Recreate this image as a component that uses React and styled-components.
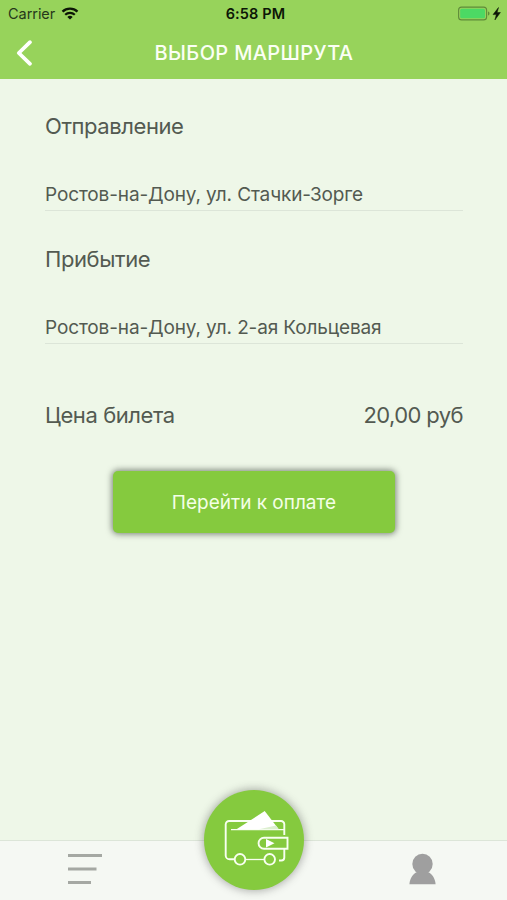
import React from 'react';
import styled, { createGlobalStyle } from 'styled-components';

const colors = {
  header: '#97d35b',
  primary: '#85ca3e',
  background: '#eef7e8',
  tabBar: '#f5f8f3',
  text: '#535a51',
  line: '#dce5d8',
  icon: '#9f9f9f',
};

const WifiIcon = () => (
  <svg width="18" height="13" viewBox="0 0 18 13">
    <path d="M1.5 4.6a11 11 0 0 1 15 0" fill="none" stroke="#0c1606" strokeWidth="2.3" />
    <path d="M4.2 7.7a7 7 0 0 1 9.6 0" fill="none" stroke="#0c1606" strokeWidth="2.2" />
    <path d="M6.3 9.9a4 4 0 0 1 5.4 0L9 12.6z" fill="#0c1606" />
  </svg>
);

const BatteryIcon = () => (
  <svg width="44" height="16" viewBox="0 0 44 16">
    <rect x="0.6" y="1.1" width="28" height="12.8" rx="3" fill="none" stroke="#5f8b3a" strokeWidth="1.1" />
    <rect x="2.2" y="2.7" width="24.8" height="9.6" rx="1.6" fill="#4cd964" />
    <path d="M30 5.5v4c2-.5 2-3.5 0-4z" fill="#5f8b3a" />
    <path d="M40.500 1.500L35 8.600h3.300L36.900 14l5.500-7.500h-3.300z" fill="#0c1606" stroke="#0c1606" strokeWidth=".5" />
  </svg>
);

const BackIcon = () => (
  <svg width="18" height="28" viewBox="0 0 18 28">
    <path d="M15 3.200L3.800 14 15 24.800" fill="none" stroke="#fff" strokeWidth="3.800" strokeLinecap="round" strokeLinejoin="round" />
  </svg>
);

const MenuIcon = () => (
  <svg width="34" height="32" viewBox="0 0 34 32">
    <path d="M0 2.500h34M0 16h28.500M0 29.500h23" stroke="#a5a8a3" strokeWidth="2.800" />
  </svg>
);

const UserIcon = () => (
  <svg width="28" height="32" viewBox="0 0 28 32" fill={colors.icon}>
    <circle cx="13.500" cy="11" r="10.200" />
    <path d="M.4 31.300C.8 25 4.400 20.600 8.500 18.800h10c4.100 1.800 7.700 6.200 8.100 12.500z" />
  </svg>
);

const WalletIcon = () => (
  <svg width="100" height="100" viewBox="0 0 100 100" fill="none" stroke="#f8fff0" strokeWidth="1.900">
    <path d="M30.500 69.300h-5a3.800 3.800 0 0 1-3.800-3.800V34.500a3.500 3.500 0 0 1 3.500-3.500H47" />
    <path d="M66 31h11a3.300 3.300 0 0 1 3.300 3.300V45" />
    <path d="M80.300 59v8.500a3 3 0 0 1-3 3H75" />
    <path d="M41.500 69.500H60" strokeWidth="1.300" />
    <path d="M27 39.700h53" strokeWidth="1.300" />
    <path d="M32.500 39.300L60.700 21l14 18.300z" fill="#fff" stroke="none" />
    <path d="M55 39.300l17-3.700 2.700 3.700z" fill="#dcefd0" stroke="none" />
    <circle cx="36" cy="69.300" r="5.300" />
    <circle cx="65.700" cy="69.300" r="5.300" />
    <path d="M83.500 47.800H60a5.400 5.400 0 0 0 0 10.900h23.500z" />
    <path d="M62 49l8.500 4.200L62 57.400z" fill="#fff" stroke="none" />
  </svg>
);

const Field = ({ label, value }) => (
  <FieldWrapper>
    <Label>{label}</Label>
    <Value>{value}</Value>
  </FieldWrapper>
);

const App = () => {
  return (
    <Screen>
      <GlobalStyle />
      <Header>
        <StatusBar>
          <Carrier>
            Carrier
            <WifiIcon />
          </Carrier>
          <Time>6:58 PM</Time>
          <Battery>
            <BatteryIcon />
          </Battery>
        </StatusBar>
        <NavBar>
          <BackButton aria-label="Назад">
            <BackIcon />
          </BackButton>
          <Title>ВЫБОР МАРШРУТА</Title>
        </NavBar>
      </Header>
      <Content>
        <Field label="Отправление" value="Ростов-на-Дону, ул. Стачки-Зорге" />
        <Field label="Прибытие" value="Ростов-на-Дону, ул. 2-ая Кольцевая" />
        <PriceRow>
          <Label>Цена билета</Label>
          <Price>20,00 руб</Price>
        </PriceRow>
        <PayButton>Перейти к оплате</PayButton>
      </Content>
      <TabBar>
        <Tab>
          <MenuIcon />
        </Tab>
        <WalletButton aria-label="Кошелёк">
          <WalletIcon />
        </WalletButton>
        <Tab>
          <UserIcon />
        </Tab>
      </TabBar>
    </Screen>
  );
};

const GlobalStyle = createGlobalStyle`
  * {
    box-sizing: border-box;
  }
  body {
    margin: 0;
    font-family: Inter, Roboto, sans-serif;
  }
  button {
    padding: 0;
    border: none;
    background: none;
    font-family: inherit;
  }
  svg {
    display: block;
    flex-shrink: 0;
  }
`;

const Screen = styled('div')`
  display: flex;
  flex-direction: column;
  height: 900px;
  overflow: hidden;
  background: ${colors.background};
  color: ${colors.text};
`;

const Header = styled('header')`
  height: 79px;
  background: ${colors.header};
`;

const StatusBar = styled('div')`
  display: grid;
  grid-template-columns: 1fr auto 1fr;
  align-items: center;
  height: 27px;
  padding: 0 5px 0 8px;
  color: #0c1606;
  font-size: 14.5px;
`;

const Carrier = styled('div')`
  display: flex;
  align-items: center;
  gap: 6px;
  color: #26381a;
  letter-spacing: -0.05px;
`;

const Time = styled('div')`
  padding-left: 1px;
  font-weight: 600;
  letter-spacing: 0.15px;
`;

const Battery = styled('div')`
  display: flex;
  justify-content: flex-end;
`;

const NavBar = styled('div')`
  display: grid;
  grid-template-columns: 60px 1fr 60px;
  align-items: center;
  height: 52px;
`;

const BackButton = styled('button')`
  padding-left: 15px;
`;

const Title = styled('h1')`
  margin: 0;
  padding-left: 1px;
  color: #fbfff5;
  font-size: 20px;
  font-weight: 500;
  line-height: 52px;
  letter-spacing: 0.36px;
  text-align: center;
  white-space: nowrap;
`;

const Content = styled('main')`
  display: flex;
  flex: 1;
  flex-direction: column;
  padding: 32px 44px 0 45px;
`;

const FieldWrapper = styled('div')`
  display: flex;
  flex-direction: column;
  height: 132.5px;
`;

const Label = styled('div')`
  font-size: 22px;
  line-height: 30px;
  letter-spacing: -0.42px;
  white-space: nowrap;
`;

const Value = styled('div')`
  height: 36px;
  margin-top: 34px;
  border-bottom: 1px solid ${colors.line};
  font-size: 19px;
  line-height: 39px;
  letter-spacing: -0.13px;
  white-space: nowrap;
`;

const PriceRow = styled('div')`
  display: flex;
  justify-content: space-between;
  margin-top: 24px;
`;

const Price = styled(Label)`
  letter-spacing: -0.6px;
  text-align: right;
`;

const PayButton = styled('button')`
  align-self: center;
  width: 282px;
  height: 62px;
  margin-top: 41px;
  border-radius: 5px;
  background: ${colors.primary};
  box-shadow: 0 0 6px 1px rgba(40, 50, 40, 0.6);
  color: #f4ffe6;
  font-size: 19px;
`;

const TabBar = styled('nav')`
  display: grid;
  grid-template-columns: repeat(3, 1fr);
  justify-items: center;
  height: 60px;
  border-top: 1px solid ${colors.line};
  background: ${colors.tabBar};
`;

const Tab = styled('div')`
  display: flex;
  align-items: center;
  justify-content: center;
  padding-bottom: 3px;
`;

const WalletButton = styled('button')`
  width: 100px;
  height: 100px;
  margin-top: -51px;
  border-radius: 50%;
  background: ${colors.primary};
  box-shadow: 0 0 9px 1px rgba(60, 60, 60, 0.4);
`;

export default App;
